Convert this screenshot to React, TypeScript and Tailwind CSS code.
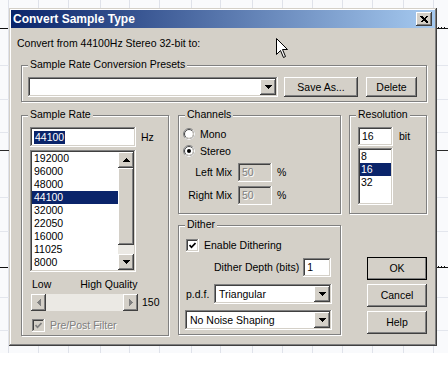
import React from 'react'

const raised =
  'bg-[#d4d0c8] shadow-[inset_-1px_-1px_#404040,inset_1px_1px_#ffffff,inset_-2px_-2px_#808080,inset_2px_2px_#d4d0c8]'
const sunken =
  'shadow-[inset_-1px_-1px_#ffffff,inset_1px_1px_#808080,inset_-2px_-2px_#d4d0c8,inset_2px_2px_#404040]'
const disabledText = 'text-[#808080] [text-shadow:1px_1px_0_#ffffff]'

type Dir = 'up' | 'down' | 'left' | 'right'

function Tri({ dir, color = '#000000' }: { dir: Dir; color?: string }) {
  const pts = {
    up: '3.5,0 7,4 0,4',
    down: '0,0 7,0 3.5,4',
    left: '4,0 4,7 0,3.5',
    right: '0,0 4,3.5 0,7',
  }[dir]
  const vertical = dir === 'up' || dir === 'down'
  return (
    <svg
      width={vertical ? 7 : 4}
      height={vertical ? 4 : 7}
      viewBox={vertical ? '0 0 7 4' : '0 0 4 7'}
      shapeRendering="crispEdges"
    >
      <polygon points={pts} fill={color} />
    </svg>
  )
}

function ArrowBtn({ dir, className = '' }: { dir: Dir; className?: string }) {
  return (
    <div className={`w-[16px] h-[16px] shrink-0 flex items-center justify-center ${raised} ${className}`}>
      <Tri dir={dir} />
    </div>
  )
}

function Group({
  label,
  className = '',
  children,
}: {
  label: string
  className?: string
  children?: React.ReactNode
}) {
  return (
    <div
      className={`relative border border-[#808080] shadow-[inset_1px_1px_#ffffff,1px_1px_#ffffff] ${className}`}
    >
      <span className="absolute left-[6px] top-[-8px] px-[2px] bg-[#d4d0c8] leading-[13px] whitespace-nowrap">
        {label}
      </span>
      {children}
    </div>
  )
}

function Combo({ value, className = '' }: { value: string; className?: string }) {
  return (
    <div className={`flex items-center bg-white p-[2px] h-[20px] ${sunken} ${className}`}>
      <span className="flex-1 pl-[3px] whitespace-nowrap overflow-hidden">{value}</span>
      <ArrowBtn dir="down" />
    </div>
  )
}

function Button({
  label,
  isDefault,
  className = '',
}: {
  label: string
  isDefault?: boolean
  className?: string
}) {
  return (
    <div
      className={`flex items-center justify-center ${raised} ${
        isDefault ? 'outline outline-1 outline-black -outline-offset-1' : ''
      } ${className}`}
    >
      {label}
    </div>
  )
}

function Check({ checked, disabled }: { checked?: boolean; disabled?: boolean }) {
  return (
    <div
      className={`w-[13px] h-[13px] shrink-0 flex items-center justify-center ${
        disabled ? 'bg-[#d4d0c8]' : 'bg-white'
      } ${sunken}`}
    >
      {checked && (
        <svg width="7" height="7" viewBox="0 0 7 7">
          <path
            d="M0.5 3 L2.5 5.3 L6.5 1"
            fill="none"
            stroke={disabled ? '#808080' : '#000000'}
            strokeWidth="1.7"
          />
        </svg>
      )}
    </div>
  )
}

function Radio({ checked }: { checked?: boolean }) {
  return (
    <svg width="12" height="12" viewBox="0 0 12 12" className="shrink-0">
      <circle cx="6" cy="6" r="5.5" fill="#ffffff" stroke="#808080" />
      <path d="M9.9 2.1 A5.5 5.5 0 0 1 2.1 9.9" fill="none" stroke="#ffffff" />
      <circle cx="6" cy="6" r="4.5" fill="#ffffff" stroke="#404040" />
      <path d="M9.2 2.8 A4.5 4.5 0 0 1 2.8 9.2" fill="none" stroke="#d4d0c8" />
      {checked && <circle cx="6" cy="6" r="2" fill="#000000" />}
    </svg>
  )
}

function Field({
  children,
  disabled,
  className = '',
}: {
  children?: React.ReactNode
  disabled?: boolean
  className?: string
}) {
  return (
    <div
      className={`flex items-center pl-[4px] ${disabled ? 'bg-[#d4d0c8]' : 'bg-white'} ${sunken} ${className}`}
    >
      {children}
    </div>
  )
}

const rates = ['192000', '96000', '48000', '44100', '32000', '22050', '16000', '11025', '8000', '6000']

function Backdrop() {
  const xs = [8, 38, 68, 100, 129, 159, 191, 220, 252, 282, 312, 342, 372, 403, 433]
  const ys = [65, 99, 132, 197, 231, 297, 330]
  return (
    <svg className="absolute inset-0" width="448" height="353" shapeRendering="crispEdges">
      <rect width="448" height="353" fill="#f9fafc" />
      {xs.map((x) => (
        <line key={x} x1={x + 0.5} y1="0" x2={x + 0.5} y2="353" stroke="#dfe2ea" />
      ))}
      {ys.map((y) => (
        <line key={y} x1="0" y1={y + 0.5} x2="448" y2={y + 0.5} stroke="#e3e6ed" />
      ))}
      <line x1="0" y1="150.5" x2="448" y2="150.5" stroke="#2a2a2a" />
      <path d="M0 28.5 H8 M437 28.5 H448 M438 27.5 H439 M441 27.5 H442 M444 27.5 H445" stroke="#111111" />
      <path d="M0 267.5 H8 M437 267.5 H448 M438 266.5 H439 M441 266.5 H442 M444 266.5 H445" stroke="#111111" />
    </svg>
  )
}

export default function App() {
  return (
    <div className="relative w-[448px] h-[384px] bg-white overflow-hidden font-['Liberation_Sans',Arial,sans-serif] text-[10.5px] leading-[13px] text-black">
      <div className="relative h-[353px]">
        <Backdrop />
        <div className="relative pl-[9px] pt-[8px]">
          <div
            className={`w-[428px] h-[338px] p-[2px] bg-[#d4d0c8] shadow-[inset_-1px_-1px_#404040,inset_1px_1px_#d4d0c8,inset_-2px_-2px_#808080,inset_2px_2px_#ffffff]`}
          >
            {/* title bar */}
            <div className="h-[18px] flex items-center pl-[2px] pr-[3px] bg-[linear-gradient(to_right,#0a246a,#a6caf0)]">
              <span className="flex-1 text-white font-bold text-[12px]">Convert Sample Type</span>
              <div className={`w-[16px] h-[14px] flex items-center justify-center ${raised}`}>
                <svg width="8" height="7" viewBox="0 0 8 7" shapeRendering="crispEdges">
                  <path d="M0.5 0 L7 6.5 M1.5 0 L8 6.5 M7 0 L0.5 6.5 M8 0 L1.5 6.5" stroke="#000000" />
                </svg>
              </div>
            </div>

            <div className="flex flex-col">
              <div className="mt-[9px] ml-[6px]">Convert from 44100Hz Stereo 32-bit to:</div>

              {/* presets */}
              <Group label="Sample Rate Conversion Presets" className="mt-[15px] ml-[10px] w-[406px] h-[37px]">
                <div className="flex pt-[11px] pl-[6px]">
                  <Combo value="" className="w-[250px]" />
                  <Button label="Save As..." className="ml-[6px] w-[74px] h-[20px]" />
                  <Button label="Delete" className="ml-[8px] w-[51px] h-[20px]" />
                </div>
              </Group>

              <div className="flex ml-[10px] mt-[13px]">
                {/* sample rate */}
                <Group label="Sample Rate" className="w-[148px] h-[221px]">
                  <div className="flex flex-col pt-[11px] pl-[8px]">
                    <div className="flex items-center">
                      <Field className="w-[106px] h-[20px] pl-[2px]">
                        <span className="bg-[#0a246a] text-white px-[1px]">44100</span>
                      </Field>
                      <span className="ml-[5px]">Hz</span>
                    </div>
                    <div className={`mt-[3px] w-[106px] h-[122px] p-[2px] bg-white flex ${sunken}`}>
                      <div className="flex-1 overflow-hidden">
                        {rates.map((r, i) => (
                          <div
                            key={r}
                            className={`h-[13px] pl-[2px] ${i === 3 ? 'bg-[#0a246a] text-white' : ''}`}
                          >
                            {r}
                          </div>
                        ))}
                      </div>
                      <div className="w-[16px] flex flex-col">
                        <ArrowBtn dir="up" />
                        <div className={`h-[77px] ${raised}`} />
                        <div className="flex-1 bg-[#ebe9e4]" />
                        <ArrowBtn dir="down" />
                      </div>
                    </div>
                    <div className="flex mt-[6px] pl-[2px]">
                      <span>Low</span>
                      <span className="ml-[29px]">High Quality</span>
                    </div>
                    <div className="flex items-center mt-[3px] ml-[1px]">
                      <div className="flex w-[107px] h-[17px]">
                        <div className={`w-[15px] h-[17px] flex items-center justify-center ${raised}`}>
                          <Tri dir="left" color="#808080" />
                        </div>
                        <div className="flex-1 bg-[#ebe9e4]" />
                        <div className={`w-[15px] h-[17px] flex items-center justify-center ${raised}`}>
                          <Tri dir="right" color="#808080" />
                        </div>
                      </div>
                      <span className="ml-[4px]">150</span>
                    </div>
                    <div className="flex items-center mt-[8px] ml-[2px]">
                      <Check checked disabled />
                      <span className={`ml-[5px] ${disabledText}`}>Pre/Post Filter</span>
                    </div>
                  </div>
                </Group>

                <div className="flex flex-col ml-[9px]">
                  {/* channels */}
                  <Group label="Channels" className="w-[163px] h-[99px]">
                    <div className="flex flex-col pt-[11px] pl-[4px]">
                      <div className="flex items-center h-[14px]">
                        <Radio />
                        <span className="ml-[5px]">Mono</span>
                      </div>
                      <div className="flex items-center h-[14px] mt-[3px]">
                        <Radio checked />
                        <span className="ml-[5px]">Stereo</span>
                      </div>
                      <div className="flex items-center mt-[5px] -ml-[4px]">
                        <span className="w-[53px] text-right">Left Mix</span>
                        <Field disabled className={`ml-[6px] w-[34px] h-[19px] pl-[3px] ${disabledText}`}>
                          50
                        </Field>
                        <span className="ml-[5px]">%</span>
                      </div>
                      <div className="flex items-center mt-[4px] -ml-[4px]">
                        <span className="w-[53px] text-right">Right Mix</span>
                        <Field disabled className={`ml-[6px] w-[34px] h-[19px] pl-[3px] ${disabledText}`}>
                          50
                        </Field>
                        <span className="ml-[5px]">%</span>
                      </div>
                    </div>
                  </Group>

                  {/* dither */}
                  <Group label="Dither" className="mt-[11px] w-[163px] h-[110px]">
                    <div className="flex flex-col pt-[13px] pl-[7px]">
                      <div className="flex items-center">
                        <Check checked />
                        <span className="ml-[5px]">Enable Dithering</span>
                      </div>
                      <div className="flex items-center mt-[6px] pl-[28px]">
                        <span>Dither Depth (bits)</span>
                        <Field className="ml-[4px] w-[28px] h-[19px] pl-[3px]">1</Field>
                      </div>
                      <div className="flex items-center mt-[7px]">
                        <span className="w-[28px]">p.d.f.</span>
                        <Combo value="Triangular" className="w-[118px] h-[19px]" />
                      </div>
                      <Combo value="No Noise Shaping" className="mt-[6px] -ml-[1px] w-[147px] h-[19px]" />
                    </div>
                  </Group>
                </div>

                <div className="flex flex-col ml-[8px]">
                  {/* resolution */}
                  <Group label="Resolution" className="w-[78px] h-[99px]">
                    <div className="flex flex-col pt-[11px] pl-[8px]">
                      <div className="flex items-center">
                        <Field className="w-[35px] h-[19px] pl-[3px]">16</Field>
                        <span className="ml-[6px]">bit</span>
                      </div>
                      <div className={`mt-[2px] w-[35px] h-[57px] p-[2px] bg-white ${sunken}`}>
                        {['8', '16', '32'].map((b) => (
                          <div key={b} className={`h-[13px] pl-[1px] ${b === '16' ? 'bg-[#0a246a] text-white' : ''}`}>
                            {b}
                          </div>
                        ))}
                      </div>
                    </div>
                  </Group>

                  <div className="flex flex-col ml-[18px] mt-[43px]">
                    <Button label="OK" isDefault className="w-[60px] h-[23px]" />
                    <Button label="Cancel" className="mt-[4px] w-[60px] h-[23px]" />
                    <Button label="Help" className="mt-[4px] w-[60px] h-[23px]" />
                  </div>
                </div>
              </div>
            </div>
          </div>
        </div>

        {/* mouse pointer */}
        <svg className="absolute left-[276px] top-[38px]" width="13" height="21" viewBox="0 0 13 21">
          <path d="M0.5 0.5 L0.5 16.5 L4.5 12.5 L7.5 19.5 L9.5 18.5 L6.5 11.5 L11.5 11.5 Z" fill="#ffffff" stroke="#000000" />
        </svg>
      </div>
    </div>
  )
}
